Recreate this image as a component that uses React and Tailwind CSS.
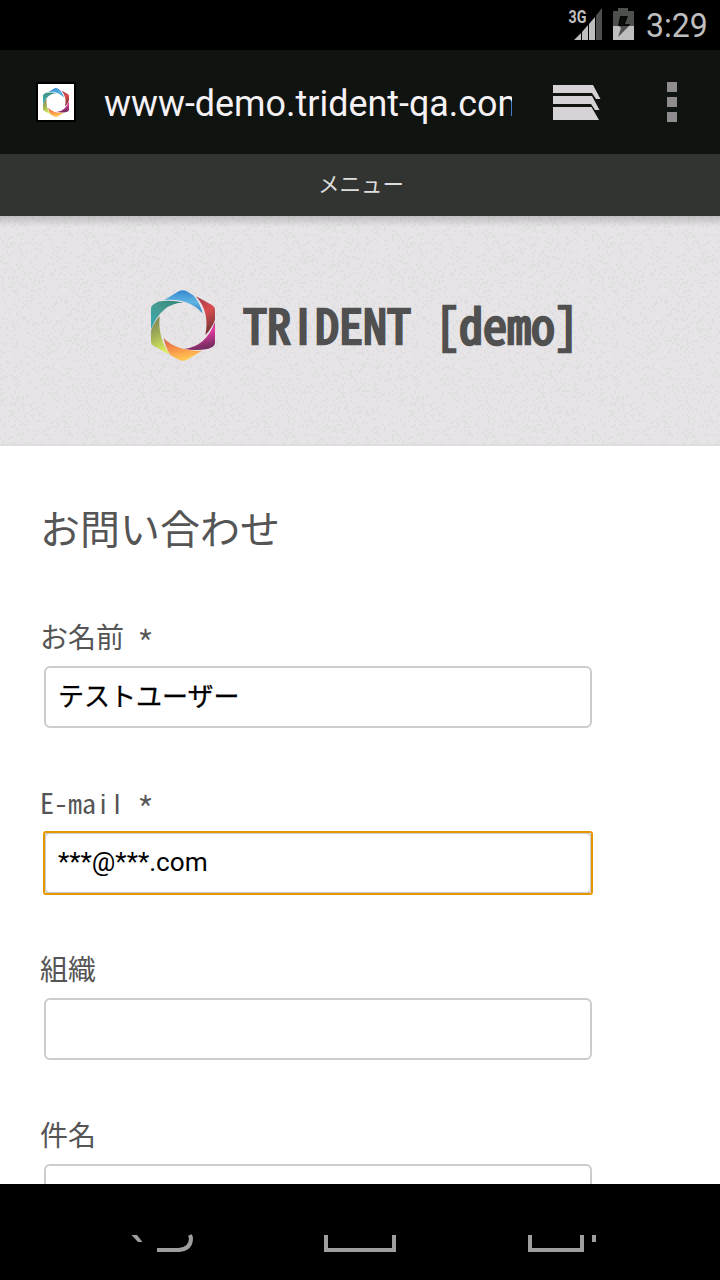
import React from "react";

const speckles = (() => {
  let seed = 1977;
  let d = "";
  for (let y = 0; y < 200; y += 2) {
    for (let x = 0; x < 200; x += 2) {
      seed = (seed * 1103515245 + 12345) % 2147483648;
      if (seed / 2147483648 < 0.2) d += `M${x} ${y}h2v2h-2z`;
    }
  }
  return d;
})();

function Logo({ id, className }) {
  const colors = [
    ["blue", "#3486cf", "#5fb4e2", "#2f7fc0"],
    ["red", "#a03c48", "#d94c4e", "#7c3438"],
    ["pink", "#7a2d62", "#e73aa5", "#7a2d62"],
    ["orange", "#d06048", "#f98f49", "#ffc653"],
    ["olive", "#75795a", "#a0ad57", "#d6ea5c"],
    ["teal", "#2f8076", "#459b90", "#35a9b6"],
  ];
  return (
    <svg className={className} viewBox="63 59 192 214" preserveAspectRatio="none">
      <defs>
        {colors.map(([n, a, b, c], i) => (
          <linearGradient key={n} id={id + n} x1={i === 5 ? "1" : "0"} y1="0" x2={i === 0 || i === 5 ? "0" : "0.3"} y2="1">
            <stop offset="0" stopColor={a} />
            <stop offset="0.5" stopColor={b} />
            <stop offset="1" stopColor={c} />
          </linearGradient>
        ))}
      </defs>
      <path fill={`url(#${id}blue)`} d="M103 89L146 63Q158 56 170 63L190 75Q211 100 218 130Q180 84 103 89Z" />
      <path fill={`url(#${id}red)`} d="M198 78L246 104Q255 109 255 118V149Q245 176 226 195Q240 125 198 78Z" />
      <path fill={`url(#${id}pink)`} d="M255 155V219Q255 226 248 230L236 236Q200 243 162 237Q228 230 255 155Z" />
      <path fill={`url(#${id}orange)`} d="M101 204Q135 242 215 243L171 269Q158 276 146 269L122 256Q107 235 101 204Z" />
      <path fill={`url(#${id}olive)`} d="M89 137Q83 205 120 254L70 227Q63 223 63 215V182Q70 157 89 137Z" />
      <path fill={`url(#${id}teal)`} d="M160 97Q95 99 63 177V114Q63 107 70 103L86 94Q125 88 160 97Z" />
    </svg>
  );
}

function StatusBar() {
  return (
    <div className="flex h-[50px] shrink-0 items-center justify-end bg-black pr-[12px] text-[#bebebe]">
      <svg className="h-[50px] w-[79px]" viewBox="0 0 79 50">
        <text x="1.5" y="23" fontFamily="Roboto" fontSize="18" fontWeight="700" fill="#bebebe" textLength="18" lengthAdjust="spacingAndGlyphs">3G</text>
        <path fill="#bebebe" d="M7 40L14 33V40ZM15 32L21 25V40H15ZM22 24L28 17V40H22Z" />
        <path fill="#4d504d" d="M29 15.500L35 8V40H29Z" />
        <path fill="#4d504d" d="M46 11H51V8H61V11H67V26H46Z" />
        <path fill="#bebebe" d="M46 26H67V40H46Z" />
        <path fill="#080b08" d="M53 16H61L58 24H63L62 26H51Z" />
        <path fill="#4d504d" d="M52 26H62L51 37L54 28Z" />
      </svg>
      <span className="w-[62px] origin-left scale-x-[0.97] whitespace-nowrap pt-[2px] font-[Roboto,sans-serif] text-[33px] leading-[50px]">3:29</span>
    </div>
  );
}

function Toolbar() {
  return (
    <div className="flex h-[104px] shrink-0 items-center bg-[#101411]">
      <div className="ml-[36px] flex size-[40px] items-center justify-center border-2 border-black bg-white">
        <Logo id="fav" className="h-[29px] w-[26px]" />
      </div>
      <div className="ml-[28px] w-[408px] overflow-hidden whitespace-nowrap pt-[4px] font-[Roboto,sans-serif] text-[37px] leading-[48px] text-[#f5f1f5]">
        <span className="inline-block origin-left scale-x-[0.97]">www-demo.trident-qa.com</span>
      </div>
      <svg className="ml-[41px] mt-[2px] h-[36px] w-[48px]" viewBox="0 0 48 36">
        <path fill="#d6d3d6" d="M0 0H40L47.500 14H43L39 8H0ZM0 11H39L46.500 25H42L38 19H0ZM0 22H38.500L46 35H0Z" />
      </svg>
      <div className="ml-[66px] flex flex-col gap-[5px]">
        <i className="size-[10px] bg-[#8f8c8f]" />
        <i className="size-[10px] bg-[#8f8c8f]" />
        <i className="size-[10px] bg-[#8f8c8f]" />
      </div>
    </div>
  );
}

const Bare = ({ children }) => (
  <span className="inline-block w-[0.5em] text-center font-['Liberation_Sans',sans-serif] [font-feature-settings:normal]">{children}</span>
);

const Star = () => (
  <span className="inline-block w-[14px] translate-x-[-2px] translate-y-[11px] text-[38px] font-light leading-none [-webkit-text-stroke:0.3px_#555]">*</span>
);

function Field({ label, value, focused }) {
  return (
    <div className="h-[166px] shrink-0">
      <div className="h-[56px] whitespace-pre pl-[40px] text-[28px] leading-[52px] text-[#555] [font-feature-settings:'hwid']">{label}</div>
      <div className={"ml-[44px] w-[548px] " + (focused ? "rounded-[2px] outline-2 -outline-offset-1 outline-[#e59700]" : "")}>
        <div className={"flex h-[62px] items-center rounded-[6px] border-2 border-[#ccc] px-[12px] text-black " + (focused ? "font-[Roboto,sans-serif] text-[26.2px]" : "pb-[5px] text-[26px] [-webkit-text-stroke:0.3px_#000]")}>
          {value}
        </div>
      </div>
    </div>
  );
}

export default function App() {
  return (
    <div className="flex h-[1280px] w-[720px] flex-col overflow-hidden bg-white font-['Noto_Sans_CJK_JP',sans-serif]">
      <StatusBar />
      <Toolbar />
      <div className="h-[62px] shrink-0 bg-[#323431] pl-[2px] text-center text-[21.5px] leading-[58px] text-[#dedede]">メニュー</div>
      <header className="relative h-[230px] shrink-0 border-b-2 border-[#dfdddf] bg-[#e7e4e7]">
        <svg className="absolute inset-0 size-full">
          <defs>
            <pattern id="paper" width="200" height="200" patternUnits="userSpaceOnUse">
              <path d={speckles} fill="#dfdfdf" />
            </pattern>
            <linearGradient id="shade" x2="0" y2="1">
              <stop stopColor="#000" stopOpacity="0.16" />
              <stop offset="1" stopColor="#000" stopOpacity="0" />
            </linearGradient>
          </defs>
          <rect width="720" height="230" fill="url(#paper)" />
          <rect width="720" height="11" fill="url(#shade)" />
        </svg>
        <div className="relative flex h-[219px] items-center pl-[151px]">
          <Logo id="main" className="h-[71px] w-[64px]" />
          <h1 className="mb-[5px] ml-[28px] whitespace-pre text-[48px] leading-[60px] text-[#505050] [-webkit-text-stroke:2.500px_#505050] [font-feature-settings:'hwid']">TR<span className="inline-block w-[24px] text-center [font-feature-settings:normal]">I</span>DENT [demo]</h1>
        </div>
      </header>
      <main className="flex h-[738px] shrink-0 flex-col overflow-hidden bg-white">
        <h2 className="h-[164px] shrink-0 pl-[40px] pt-[51px] text-[40px] leading-[60px] text-[#555]">お問い合わせ</h2>
        <Field label={<>お名前 <Star /></>} value="テストユーザー" />
        <Field label={<>E-ma<Bare>i</Bare><Bare>l</Bare> <Star /></>} value="***@***.com" focused />
        <Field label="組織" />
        <Field label="件名" />
      </main>
      <nav className="h-[96px] shrink-0 bg-black">
        <svg className="h-[96px] w-[720px]" viewBox="0 0 720 96" fill="none" stroke="#a09ea0" strokeWidth="4">
          <path fill="#a09ea0" stroke="none" d="M131.500 51H137L142.500 58H138Z" />
          <path d="M157 66H179Q191 65 191 54L190 51" />
          <path d="M326 51V66H394V51M530 51V66H582V51M594 51V58" />
        </svg>
      </nav>
    </div>
  );
}
